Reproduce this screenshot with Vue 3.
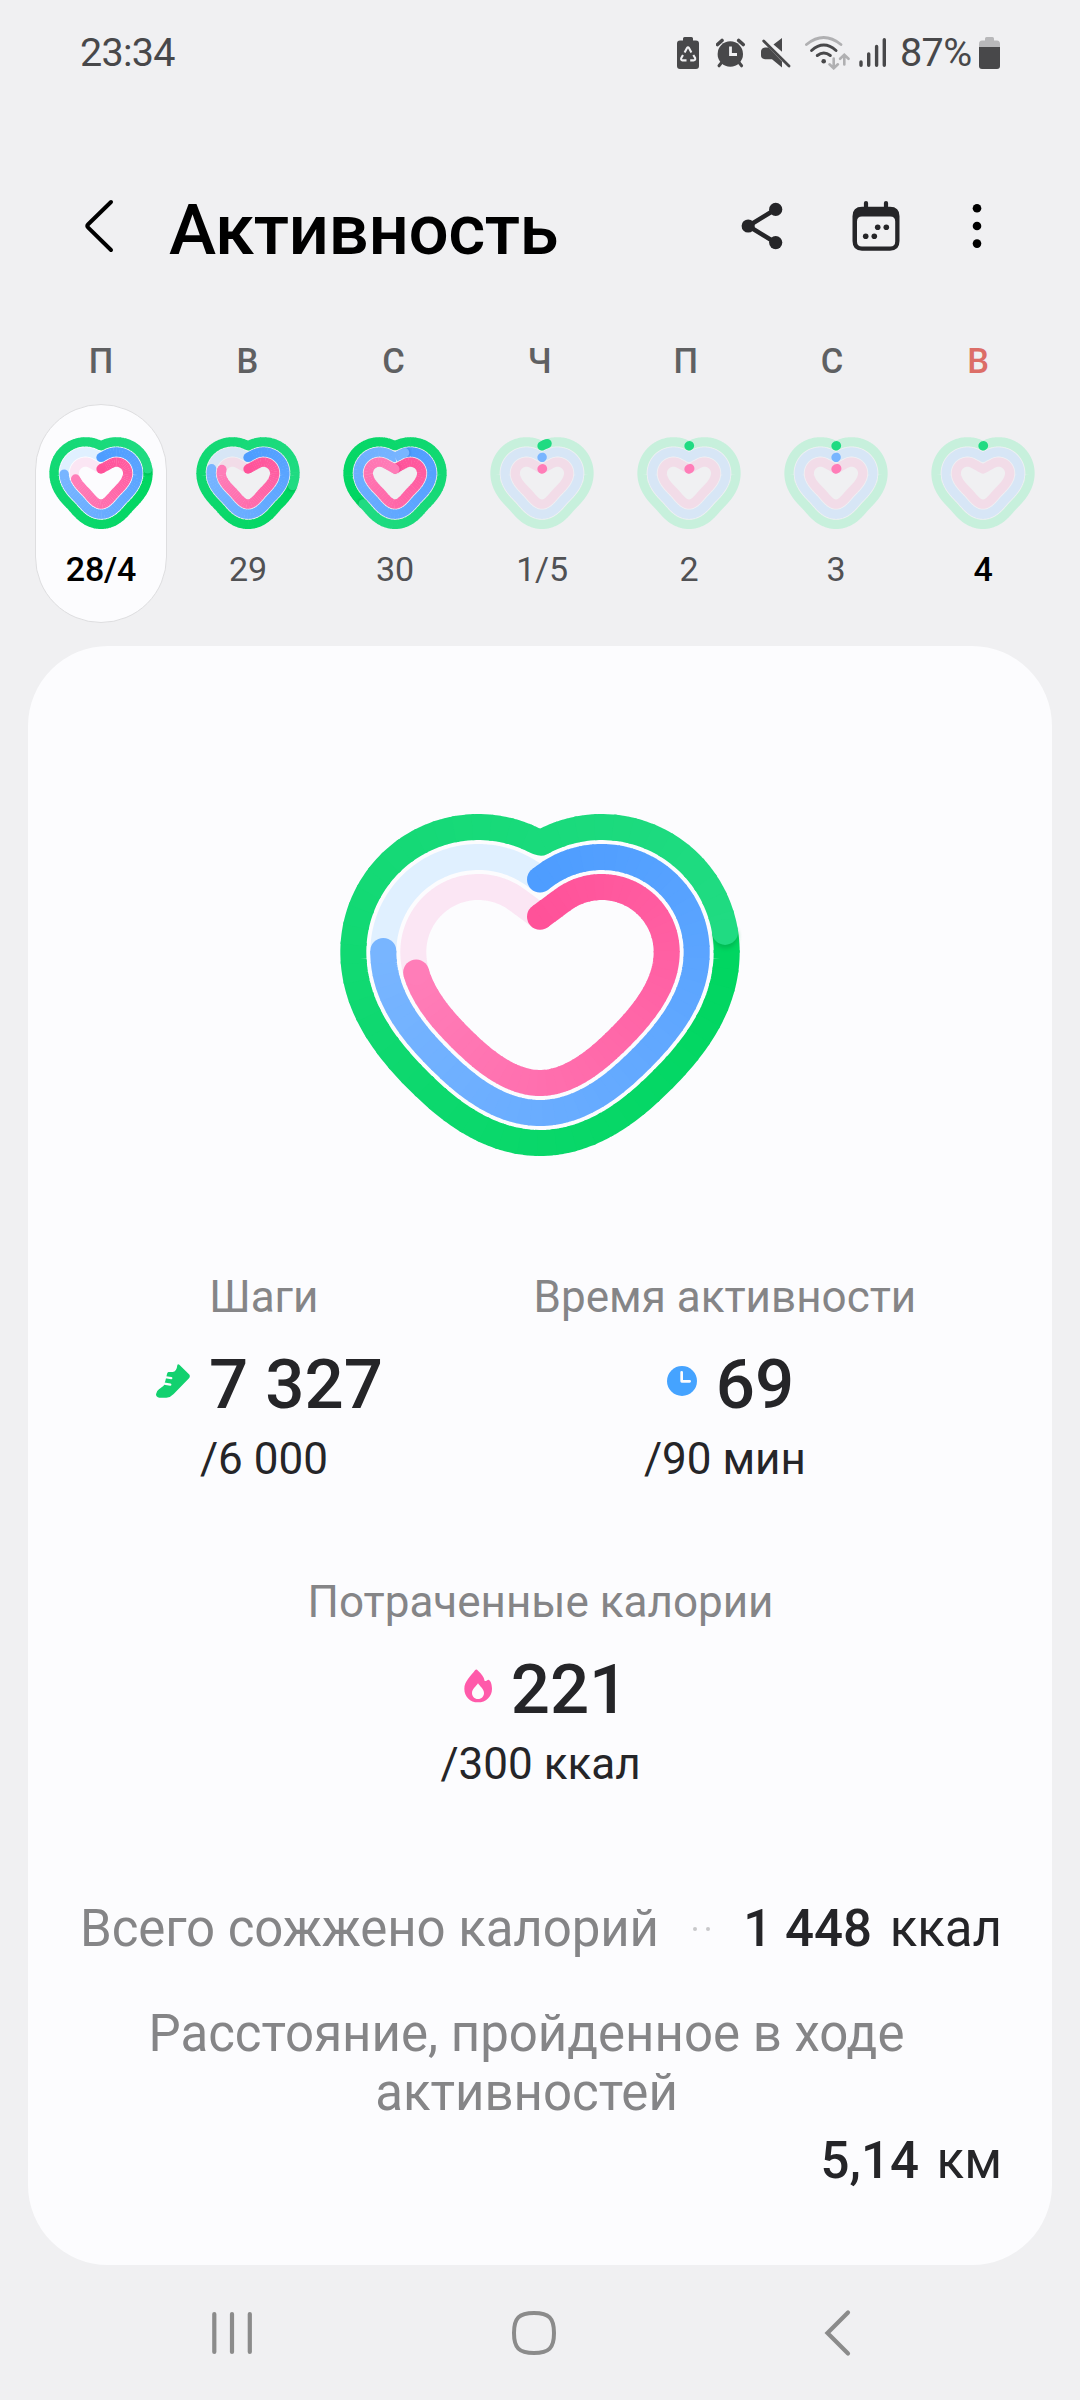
<script setup>
import { h } from 'vue'

const SHAPES = {
  large: {
    startY: 102.7, lobe: [61.7, 138], r: 65, pitch: 30, stroke: 26,
    lower: [
      [[126.7, 138], [126.7, 172.7], [101.7, 202.7], [73.3, 230]],
      [[73.3, 230], [57.3, 245.3], [30, 269], [0, 269]]
    ],
    width: 398, height: 342
  },
  small: {
    startY: 32, lobe: [15.5, 36.3], r: 11.2, pitch: 10.15, stroke: 9.3,
    lower: [
      [[26.7, 36.3], [26.7, 43], [21, 49], [15.5, 54.5]],
      [[15.5, 54.5], [11, 59], [6, 67.1], [0, 67.1]]
    ],
    width: 104, height: 92.6
  }
}

const COLORS = {
  green: { from: [0, 214, 96], to: [32, 219, 130], shadow: '#00a84a' },
  blue: { from: [78, 157, 255], to: [120, 181, 255], shadow: '#2f74d0' },
  pink: { from: [255, 82, 153], to: [255, 125, 184], shadow: '#cf2a78' }
}

function bezier(b, t) {
  const u = 1 - t
  const p = [0, 1].map(k => u * u * u * b[0][k] + 3 * u * u * t * b[1][k] + 3 * u * t * t * b[2][k] + t * t * t * b[3][k])
  const d = [0, 1].map(k => u * u * (b[1][k] - b[0][k]) + 2 * u * t * (b[2][k] - b[1][k]) + t * t * (b[3][k] - b[2][k]))
  const len = Math.hypot(d[0], d[1])
  return [p[0], p[1], d[1] / len, -d[0] / len]
}

function contour(shape, off) {
  const { startY, lobe, r } = shape
  const dist = Math.hypot(lobe[0], lobe[1] - startY)
  const dir = Math.atan2(lobe[1] - startY, lobe[0]) - Math.asin(r / dist)
  const len = Math.sqrt(dist * dist - r * r)
  const base = []
  for (let i = 0; i < 20; i++) {
    const l = (len * i) / 20
    base.push([l * Math.cos(dir), startY + l * Math.sin(dir), Math.sin(dir), -Math.cos(dir)])
  }
  for (let i = 0; i <= 60; i++) {
    const a = (dir - Math.PI / 2) * (1 - i / 60)
    base.push([lobe[0] + r * Math.cos(a), lobe[1] + r * Math.sin(a), Math.cos(a), Math.sin(a)])
  }
  for (const b of shape.lower) {
    for (let i = 1; i <= 40; i++) base.push(bezier(b, i / 40))
  }
  const shifted = base.map(([x, y, nx, ny]) => [x + nx * off, y + ny * off])
  let half = []
  const first = shifted.findIndex(p => p[0] >= -1e-6)
  if (first > 0) {
    const a = shifted[first - 1]
    const b = shifted[first]
    const t = -a[0] / (b[0] - a[0])
    half.push([0, a[1] + (b[1] - a[1]) * t])
  }
  half = half.concat(shifted.slice(first))
  const left = half.slice(0, -1).reverse().map(([x, y]) => [-x, y])
  return half.concat(left)
}

function sampler(points) {
  const acc = [0]
  for (let i = 1; i < points.length; i++) {
    acc.push(acc[i - 1] + Math.hypot(points[i][0] - points[i - 1][0], points[i][1] - points[i - 1][1]))
  }
  const total = acc[acc.length - 1]
  return s => {
    const target = (((s % 1) + 1) % 1) * total
    let i = 1
    while (i < acc.length - 1 && acc[i] < target) i++
    const t = (target - acc[i - 1]) / (acc[i] - acc[i - 1] || 1)
    const a = points[i - 1]
    const b = points[i]
    return [a[0] + (b[0] - a[0]) * t, a[1] + (b[1] - a[1]) * t]
  }
}

const fmt = list => 'M' + list.map(p => p[0].toFixed(2) + ' ' + p[1].toFixed(2)).join('L')
const tint = (c, t) => `rgb(${c.from.map((v, k) => Math.round(v + (c.to[k] - v) * t)).join(',')})`

function ring(shape, name, index, progress, track) {
  const color = COLORS[name]
  const points = contour(shape, shape.pitch * (2 - index))
  const at = sampler(points)
  const w = shape.stroke
  const out = []
  if (!(progress >= 1)) {
    out.push(h('path', { d: fmt(points.slice(0, -1)) + 'Z', fill: 'none', stroke: track, 'stroke-width': w, 'stroke-linejoin': 'round' }))
  }
  if (progress == null) return out
  const dot = (s, fill, extra = {}) => {
    const [cx, cy] = at(s)
    return h('circle', { cx, cy, r: w / 2, fill, ...extra })
  }
  if (progress < 0.05) {
    out.push(h('path', { d: fmt([0, 0.5, 1].map(t => at(t * progress))), fill: 'none', stroke: tint(color, 1), 'stroke-width': w, 'stroke-linecap': 'round' }))
    return out
  }
  const start = Math.max(0, progress - 1)
  const span = progress - start
  const count = 60
  if (start === 0) out.push(dot(0, tint(color, 0)))
  for (let i = 0; i < count; i++) {
    if (progress >= 1 && i === count - 4) {
      const len = shape.width * 2.6
      out.push(dot(progress + (w * 0.16) / len, color.shadow, { r: w / 2 - w * 0.04, opacity: 0.6, style: `filter: blur(${w * 0.09}px)` }))
    }
    const a = start + (span * i) / count
    const b = start + (span * (i + (i === count - 1 ? 1 : 1.15))) / count
    const pts = [0, 0.2, 0.4, 0.6, 0.8, 1].map(t => at(a + (b - a) * t))
    out.push(h('path', { d: fmt(pts), fill: 'none', stroke: tint(color, i / (count - 1)), 'stroke-width': w, 'stroke-linejoin': 'round' }))
  }
  out.push(dot(progress, tint(color, 1)))
  return out
}

function HeartRings({ size, progress, muted }) {
  const shape = SHAPES[size]
  const tracks = muted ? ['#c7f0dc', '#d7e6f6', '#f2dce8'] : ['#d2f6e3', '#e0f0ff', '#fbe6f4']
  return h(
    'svg',
    { width: shape.width, height: shape.height, viewBox: `${-shape.width / 2} 0 ${shape.width} ${shape.height}`, style: 'display:block;overflow:visible' },
    ['green', 'blue', 'pink'].flatMap((name, i) => ring(shape, name, i, progress[i], tracks[i]))
  )
}
HeartRings.props = ['size', 'progress', 'muted']

const days = [
  { letter: 'П', date: '28/4', progress: [1.219, 0.765, 0.737], selected: true },
  { letter: 'В', date: '29', progress: [1.28, 0.79, 0.8] },
  { letter: 'С', date: '30', progress: [1.64, 1.05, 1.0] },
  { letter: 'Ч', date: '1/5', progress: [0.02, 0.001, 0.004] },
  { letter: 'П', date: '2', progress: [0.002, null, 0.006] },
  { letter: 'С', date: '3', progress: [0.002, 0.001, 0.006] },
  { letter: 'В', date: '4', progress: [0.002, null, null], today: true }
]
const today = days[0]
</script>

<template>
  <div class="screen">
    <div class="status">
      <span class="time">23:34</span>
      <div class="status-icons">
        <svg width="22" height="32" viewBox="677 37 22 32">
          <path d="M683 40.500v-2q0-1.500 1.500-1.500h7q1.500 0 1.500 1.500v2h3q3 0 3 3v22.500q0 3-3 3h-16q-3 0-3-3v-22.500q0-3 3-3z" fill="#48484a" />
          <path d="M684.600 52.500l2.400-4.500q1-1.600 2 0l2.400 4.500M693.300 55l1.800 3q.6 2.400-1.500 2.400h-3.400M686.500 60.400h-4q-2-.3-1.200-2.400l1.700-3" fill="none" stroke="#f0f0f2" stroke-width="2.100" />
        </svg>
        <svg class="alarm" width="30" height="30" viewBox="716 38 30 30">
          <circle cx="730.300" cy="54" r="12.700" fill="#48484a" />
          <path d="M717.500 44.500l4.500-4M743.200 44.500l-4.500-4" stroke="#48484a" stroke-width="3.600" stroke-linecap="round" />
          <path d="M722 62l-3 3.800M738.600 62l3 3.800" stroke="#48484a" stroke-width="3" stroke-linecap="round" />
          <path d="M730.500 46.500v8h6.500" fill="none" stroke="#f0f0f2" stroke-width="2.800" />
        </svg>
        <svg class="mute" width="31" height="30" viewBox="761 38 31 30">
          <path d="M773.500 44.500l8.500-6.500v13.800zM765 47.500h3.500L782 61.500V67.500l-10-8.200h-7q-4-.5-4-4v-3.600q0-3.600 4-4.200z" fill="#48484a" />
          <path d="M763.700 41l25.300 25" stroke="#48484a" stroke-width="2.800" stroke-linecap="round" />
        </svg>
        <svg class="wifi" width="46" height="34" viewBox="804 36 46 34">
          <g fill="none" stroke-linecap="round">
            <path d="M806.500 44.500q17.200-14 34.400 0" stroke="#b0b0b2" stroke-width="2.900" />
            <path d="M811.600 50.500q12.200-11 24.400 0M817.300 55.500q6.500-5 13 0" stroke="#48484a" stroke-width="3" />
            <path d="M833.700 58.500v9.500M829.500 64.300l4.200 4 4.200-4M844.300 64.500V55M840.100 58.800l4.200-4 4.200 4" stroke="#b0b0b2" stroke-width="2.600" />
          </g>
          <circle cx="823.700" cy="61.300" r="2.300" fill="#48484a" />
        </svg>
        <svg class="signal" width="28" height="30" viewBox="859 38 28 30">
          <path d="M861 62v3.300M868.700 54v11.300M876.600 46.500v18.800M884.300 39.800v25.500" stroke="#48484a" stroke-width="3.400" stroke-linecap="round" />
        </svg>
        <span class="percent">87%</span>
        <svg class="battery" width="21" height="32" viewBox="979 37 21 32">
          <path d="M985 40.500v-2q0-1.500 1.500-1.500h6q1.500 0 1.500 1.500v2h3q3 0 3 3.500V47h-21v-3q0-3.500 3-3.500z" fill="#b8b8ba" />
          <path d="M979 47h21v19q0 3-3 3h-15q-3 0-3-3z" fill="#48484a" />
        </svg>
      </div>
    </div>

    <header class="header">
      <svg width="32" height="56" viewBox="83 198 32 56">
        <path d="M111 202L88.200 224.300q-1.700 1.700 0 3.400L111 250" fill="none" stroke="#000" stroke-width="4" stroke-linecap="round" />
      </svg>
      <h1>Активность</h1>
      <div class="actions">
        <svg width="42" height="48" viewBox="741 202 42 48">
          <path d="M775.700 209.300L748.300 226l27.400 16.700" fill="none" stroke="#252528" stroke-width="4.600" />
          <circle cx="748.200" cy="226" r="6.600" fill="#252528" />
          <circle cx="775.700" cy="209.400" r="6.600" fill="#252528" />
          <circle cx="775.700" cy="242.600" r="6.600" fill="#252528" />
        </svg>
        <svg class="calendar" width="48" height="52" viewBox="852 200 48 52">
          <path d="M866 203v6M886 203v6" stroke="#252528" stroke-width="4.200" stroke-linecap="round" />
          <path fill-rule="evenodd" fill="#252528" d="M862 206.700h28q9.500 0 9.500 9.500V241q0 9.700-9.500 9.700h-28q-9.500 0-9.500-9.700V216.200q0-9.500 9.500-9.500zM862 216.500q-5 0-5 5V241.500q0 5 5 5h28.200q5 0 5-5v-20q0-5-5-5z" />
          <g fill="#252528">
            <circle cx="877.700" cy="227.300" r="2.800" /><circle cx="886.300" cy="227.300" r="2.800" />
            <circle cx="865.700" cy="236.300" r="2.800" /><circle cx="874.300" cy="236.300" r="2.800" />
          </g>
        </svg>
        <svg class="more" width="10" height="46" viewBox="971.700 203 10 46">
          <circle cx="976.700" cy="208.300" r="4.300" /><circle cx="976.700" cy="226" r="4.300" /><circle cx="976.700" cy="243.600" r="4.300" />
        </svg>
      </div>
    </header>

    <div class="letters">
      <span v-for="(d, i) in days" :key="i" :class="{ sunday: i === 6 }">{{ d.letter }}</span>
    </div>

    <div class="days">
      <div v-for="(d, i) in days" :key="i" class="day" :class="{ selected: d.selected, today: d.today }">
        <HeartRings size="small" :progress="d.progress" :muted="!d.selected" />
        <span>{{ d.date }}</span>
      </div>
    </div>

    <main class="card">
      <div class="hero"><HeartRings size="large" :progress="today.progress" /></div>

      <div class="stats">
        <section class="stat steps">
          <div class="label">Шаги</div>
          <div class="value">
            <svg width="34" height="34" viewBox="114 342 102 102">
              <path fill="#12d16f" d="M151 366h13q12-1 14-20 1-5 6-2l29 29q5 5 0 12l-46 47q-9 10-22 11h-21q-10-1-10-10 1-10 9-15l14-11 5-14 5-21q1-5 4-6z" />
              <path d="M138 381l22 3.500M134 400l23 4" stroke="#fcfcfe" stroke-width="6.500" stroke-linecap="round" />
            </svg>
            <b>7 327</b>
          </div>
          <div class="goal">/6 000</div>
        </section>
        <section class="stat minutes">
          <div class="label">Время активности</div>
          <div class="value">
            <svg width="30" height="30" viewBox="504 348 90 90">
              <circle cx="549" cy="393" r="45" fill="#45a3ff" />
              <path d="M548 367v27h24" fill="none" stroke="#fcfcfe" stroke-width="8" stroke-linecap="round" stroke-linejoin="round" />
            </svg>
            <b>69</b>
          </div>
          <div class="goal">/90 мин</div>
        </section>
      </div>

      <section class="stat calories">
        <div class="label">Потраченные калории</div>
        <div class="value">
          <svg width="28" height="34" viewBox="552 357 84 102">
            <path fill="#ff5aaa" d="M585 361q4-5 9 1c10 9 18 18 20 31 5 1 7-3 12-4 6 2 10 15 10 27 0 24-18 41-42 41s-41-17-41-41c0-21 19-38 32-55z" />
            <path fill="#fcfcfe" d="M594 400c6 9 18 18 18 29 0 10-7 18-18 18s-18-8-18-18c0-11 12-20 18-29z" />
          </svg>
          <b>221</b>
        </div>
        <div class="goal">/300 ккал</div>
      </section>

      <div class="total">
        <span class="name">Всего сожжено калорий</span>
        <span class="leader"><i></i><i></i></span>
        <span class="amount"><b>1 448</b> ккал</span>
      </div>
      <div class="distance">Расстояние, пройденное в ходе активностей</div>
      <div class="total last"><span class="amount"><b>5,14</b> км</span></div>
    </main>

    <nav class="nav">
      <svg width="42" height="46" viewBox="211 2311 42 46">
        <path d="M214.300 2315v38M232 2315v38M249.800 2315v38" stroke="#8b8b8b" stroke-width="4.200" stroke-linecap="round" />
      </svg>
      <svg class="home" width="46" height="46" viewBox="511 2311 46 46">
        <path d="M534 2314C549 2314 554 2319 554 2334S549 2354 534 2354 514 2349 514 2334 519 2314 534 2314z" fill="none" stroke="#8b8b8b" stroke-width="4" />
      </svg>
      <svg class="back" width="28" height="48" viewBox="824 2310 28 48">
        <path d="M848 2313.500L827.500 2334l20.500 20.500" fill="none" stroke="#8b8b8b" stroke-width="4.200" stroke-linecap="round" />
      </svg>
    </nav>
  </div>
</template>

<style>
body { background: #f0f0f2; }
</style>

<style scoped>
.screen { width: 1080px; height: 2400px; display: flex; flex-direction: column; background: #f0f0f2; font-family: Roboto, "Noto Sans", sans-serif; color: #252528; overflow: hidden; }
svg { display: block; flex: none; }
.status { height: 106px; box-sizing: border-box; padding: 0 80px; display: flex; align-items: center; justify-content: space-between; font-size: 39.5px; line-height: 40px; color: #48484a; }
.status-icons { display: flex; align-items: center; white-space: nowrap; }
.time { letter-spacing: -0.7px; }
.alarm { margin-left: 17px; }
.mute { margin-left: 15px; }
.wifi { margin-left: 12px; }
.signal { margin-left: 9px; }
.percent { margin-left: 13px; width: 74px; letter-spacing: -0.6px; }
.battery { margin-left: 5px; }

.header { height: 242px; box-sizing: border-box; padding: 0 98px 2px 83px; display: flex; align-items: center; }
h1 { margin: 8px 0 0 54px; font-size: 71px; line-height: 84px; font-weight: 500; letter-spacing: -0.5px; color: #000; white-space: nowrap; }
.actions { margin-left: auto; display: flex; align-items: center; }
.calendar { margin-left: 69px; }
.more { margin-left: 72px; }

.letters { height: 56px; margin: -15px 0 0 28px; display: grid; grid-template-columns: repeat(7, 146.2px); align-items: center; text-align: center; font-size: 34.5px; font-weight: 500; line-height: 56px; color: #5f6062; }
.letters .sunday { color: #dc6e68; }

.days { margin: 15px 0 0 27.5px; height: 219px; display: grid; grid-template-columns: repeat(7, 147px); }
.day { width: 132px; height: 219px; margin: 0 auto; box-sizing: border-box; border: 1px solid transparent; border-radius: 66px; padding-top: 32px; display: flex; flex-direction: column; align-items: center; font-size: 34px; line-height: 40px; color: #505154; }
.day span { margin-top: 19px; letter-spacing: -0.2px; }
.day.selected { background: #fcfcfe; border-color: #dedee0; font-weight: 500; color: #000; }
.day.today { font-weight: 500; color: #000; }

.card { margin: 23px 28px 0; height: 1619px; box-sizing: border-box; padding: 168px 50px 0 52px; border-radius: 80px; background: #fcfcfe; display: flex; flex-direction: column; }
.hero { display: flex; justify-content: center; margin-right: 2px; }
.stats { display: flex; margin-top: 114px; }
.stat { display: flex; flex-direction: column; align-items: center; white-space: nowrap; }
.steps { width: 369px; }
.minutes { width: 556px; }
.label { font-size: 44px; line-height: 54px; color: #858587; }
.value { height: 68px; margin-top: 27px; padding-left: 11px; display: flex; align-items: center; gap: 19px; }
.value svg { position: relative; top: -4px; }
.value b { font-size: 69px; line-height: 68px; font-weight: 500; }
.goal { margin-top: 13px; font-size: 44px; line-height: 54px; }
.calories { margin-top: 89px; margin-right: 1px; }
.total { margin-top: 108px; height: 60px; display: flex; align-items: center; font-size: 51px; line-height: 60px; white-space: nowrap; }
.name, .distance { color: #858587; }
.name { letter-spacing: -0.08px; }
.leader { flex: 1; display: flex; gap: 9px; justify-content: center; }
.leader i { width: 4px; height: 4px; border-radius: 2px; background: #c8c8ca; }
.amount { margin-left: auto; }
.amount b { font-weight: 500; margin-right: 5px; }
.distance { margin: 45px 29px 0 0; text-align: center; font-size: 51px; line-height: 59px; }
.last { margin-top: 9px; }
.nav { flex: 1; padding-left: 211px; display: flex; align-items: center; }
.home { margin-left: 258px; }
.back { margin-left: 267px; }
</style>
